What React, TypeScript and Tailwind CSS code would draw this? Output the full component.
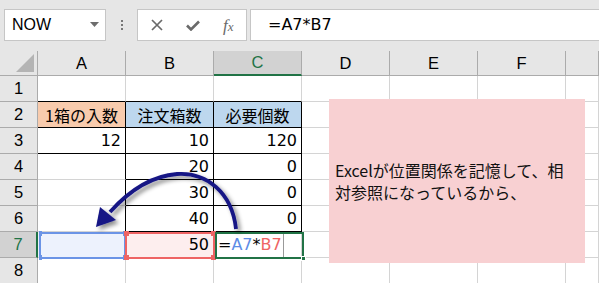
import React from "react";

const COLS = ["A", "B", "C", "D", "E", "F", ""];

type Cell = { t?: string; align?: "l" | "r" | "c"; bg?: string };

const data: Record<string, Cell> = {
  "2-0": { t: "1箱の入数", align: "c", bg: "bg-[#f8cbad]" },
  "2-1": { t: "注文箱数", align: "c", bg: "bg-[#bdd7ee]" },
  "2-2": { t: "必要個数", align: "c", bg: "bg-[#bdd7ee]" },
  "3-0": { t: "12", align: "r" },
  "3-1": { t: "10", align: "r" },
  "3-2": { t: "120", align: "r" },
  "4-1": { t: "20", align: "r" },
  "4-2": { t: "0", align: "r" },
  "5-1": { t: "30", align: "r" },
  "5-2": { t: "0", align: "r" },
  "6-1": { t: "40", align: "r" },
  "6-2": { t: "0", align: "r" },
  "7-0": { bg: "bg-[#edf2fd]" },
  "7-1": { t: "50", align: "r", bg: "bg-[#fdeeee]" },
};

function isBlack(r: number, c: number) {
  if (r === 2 && c <= 2) return true;
  if (r === 3 && c === 0) return true;
  if (r >= 3 && r <= 6 && (c === 1 || c === 2)) return true;
  return false;
}

function cellClass(r: number, c: number) {
  const rb = isBlack(r, c) || isBlack(r, c + 1);
  const bb = isBlack(r, c) || isBlack(r + 1, c);
  const d = data[`${r}-${c}`] || {};
  return [
    "border-r border-b flex items-center text-[16px] text-black overflow-hidden whitespace-nowrap",
    rb ? "border-r-black" : "border-r-[#d4d4d4]",
    bb ? "border-b-black" : "border-b-[#d4d4d4]",
    d.bg || "bg-white",
    d.align === "r"
      ? "justify-end pr-[4px] font-['DejaVu_Sans',sans-serif]"
      : d.align === "c"
      ? "justify-center font-['Noto_Sans_CJK_JP',sans-serif]"
      : "justify-start pl-[3px]",
  ].join(" ");
}

export default function App() {
  const rows = [1, 2, 3, 4, 5, 6, 7, 8];
  return (
    <div className="relative w-[599px] h-[283px] overflow-hidden bg-white font-['Liberation_Sans','Noto_Sans_CJK_JP',sans-serif]">
      {/* Toolbar */}
      <div className="h-[51px] bg-[#e6e6e6] flex items-start pt-[9px]">
        <div className="ml-[4px] w-[102px] h-[32px] bg-white border border-[#c6c6c6] flex items-center justify-between pl-[7px] pr-[6px]">
          <span className="text-[16px] text-black">NOW</span>
          <svg width="9" height="6" viewBox="0 0 9 6">
            <path d="M0 0 L9 0 L4.5 5 Z" fill="#6d6d6d" />
          </svg>
        </div>
        <div className="w-[31px] h-[32px] flex flex-col items-center justify-center gap-[2px]">
          <span className="w-[2px] h-[2px] bg-[#777]" />
          <span className="w-[2px] h-[2px] bg-[#777]" />
          <span className="w-[2px] h-[2px] bg-[#777]" />
        </div>
        <div className="w-[110px] h-[32px] bg-white border border-[#c6c6c6] flex items-center">
          <div className="w-[36px] flex justify-center ml-[1px]">
            <svg width="12" height="12" viewBox="0 0 12 12">
              <path d="M1 1 L11 11 M11 1 L1 11" stroke="#6a6a6a" strokeWidth="1.7" />
            </svg>
          </div>
          <div className="w-[36px] flex justify-center">
            <svg width="14" height="11" viewBox="0 0 14 11">
              <path d="M1 5.5 L5 9.5 L13 1.5" stroke="#6a6a6a" strokeWidth="2.6" fill="none" />
            </svg>
          </div>
          <div className="w-[36px] flex justify-center items-center">
            <span className="text-[17px] leading-none italic text-[#6a6a6a] font-['Liberation_Serif',serif]">
              f<span className="text-[13px]">x</span>
            </span>
          </div>
        </div>
        <div className="ml-[3px] flex-1 h-[32px] bg-white border-y border-l border-[#c6c6c6] flex items-center pl-[17px]">
          <span className="text-[16px] text-black font-['DejaVu_Sans',sans-serif]">=A7*B7</span>
        </div>
      </div>

      {/* Grid */}
      <div className="relative grid grid-cols-[38px_repeat(6,88px)_1fr] grid-rows-[25px_repeat(8,26px)]">
        <div className="relative bg-[#e6e6e6] border-r border-b border-[#ababab]">
          <svg className="absolute right-[3px] bottom-[3px]" width="18" height="18" viewBox="0 0 18 18">
            <path d="M18 0 L18 18 L0 18 Z" fill="#b4b4b4" />
          </svg>
        </div>
        {COLS.map((c, i) =>
          i === 2 ? (
            <div key={c + i} className="bg-[#d2d2d2] border-r border-r-[#ababab] border-b-2 border-b-[#217346] flex items-center justify-center text-[16.5px] text-[#217346]">
              {c}
            </div>
          ) : (
            <div key={c + i} className="bg-[#e6e6e6] border-r border-b border-[#ababab] flex items-center justify-center text-[16.5px] text-black">
              {c}
            </div>
          )
        )}
        {rows.map((r) => (
          <React.Fragment key={r}>
            {r === 7 ? (
              <div className="bg-[#d2d2d2] border-r-2 border-r-[#217346] border-b border-b-[#ababab] flex items-center justify-center text-[16.5px] text-[#217346]">
                {r}
              </div>
            ) : (
              <div className="bg-[#e6e6e6] border-r border-b border-[#ababab] flex items-center justify-center text-[16.5px] text-black">
                {r}
              </div>
            )}
            {COLS.map((_, c) => {
              const d = data[`${r}-${c}`];
              if (r === 7 && c === 2) {
                return (
                  <div key={c} className="bg-white border-r border-b border-[#d4d4d4] flex items-center pl-[4px] text-[16px] font-['DejaVu_Sans',sans-serif]">
                    <span className="text-black">=</span>
                    <span className="text-[#5c8ce6]">A7</span>
                    <span className="text-black">*</span>
                    <span className="text-[#ee6464]">B7</span>
                  </div>
                );
              }
              return (
                <div key={c} className={cellClass(r, c)}>
                  {d && d.t}
                </div>
              );
            })}
          </React.Fragment>
        ))}

        {/* Selection overlays (row 7 top = 181) */}
        <div className="absolute left-[39px] top-[181px] w-[87px] h-[27px] border-2 border-[#6b94e6]">
          <span className="absolute -left-[2px] -top-[3px] w-[3px] h-[5px] bg-[#6b94e6]" />
          <span className="absolute -right-[2px] -top-[3px] w-[3px] h-[5px] bg-[#6b94e6]" />
          <span className="absolute -left-[2px] -bottom-[3px] w-[3px] h-[5px] bg-[#6b94e6]" />
          <span className="absolute -right-[2px] -bottom-[3px] w-[3px] h-[5px] bg-[#6b94e6]" />
        </div>
        <div className="absolute left-[125px] top-[181px] w-[90px] h-[27px] border-2 border-[#ee6464]">
          <span className="absolute -left-[3px] -top-[3px] w-[5px] h-[5px] bg-[#ee6464]" />
          <span className="absolute -right-[3px] -top-[3px] w-[5px] h-[5px] bg-[#ee6464]" />
          <span className="absolute -left-[3px] -bottom-[3px] w-[5px] h-[5px] bg-[#ee6464]" />
          <span className="absolute -right-[3px] -bottom-[3px] w-[5px] h-[5px] bg-[#ee6464]" />
        </div>
        <div className="absolute left-[215px] top-[181px] w-[89px] h-[27px] border-2 border-[#217346]">
          <span className="absolute left-[66px] top-0 bottom-0 w-px bg-[#9a9a9a]" />
          <span className="absolute -right-[4px] -bottom-[4px] w-[5px] h-[5px] bg-[#217346] border border-white" />
        </div>
      </div>

      {/* Text box shape */}
      <div className="absolute left-[329px] top-[99px] w-[256px] h-[164px] bg-[#f8d0d2] flex items-center pl-[6px] pr-[2px]">
        <p className="whitespace-nowrap text-[16px] leading-[22px] text-[#111] font-['Noto_Sans_CJK_JP','Liberation_Sans',sans-serif]">
          Excelが位置関係を記憶して、相<br />対参照になっているから、
        </p>
      </div>

      {/* Arrow */}
      <svg className="absolute left-0 top-0 pointer-events-none" width="599" height="283" viewBox="0 0 599 283">
        <defs>
          <filter id="sh" x="-20%" y="-20%" width="140%" height="140%">
            <feDropShadow dx="3" dy="3" stdDeviation="2.2" floodColor="#000" floodOpacity="0.45" />
          </filter>
        </defs>
        <g filter="url(#sh)">
          <path d="M236 229 C232 192, 206 172, 177 174 C150 176, 128 192, 110 212" stroke="#161685" strokeWidth="3.8" fill="none" />
          <path d="M96 227 L100 207 L116 220 Z" fill="#161685" />
        </g>
      </svg>
    </div>
  );
}
